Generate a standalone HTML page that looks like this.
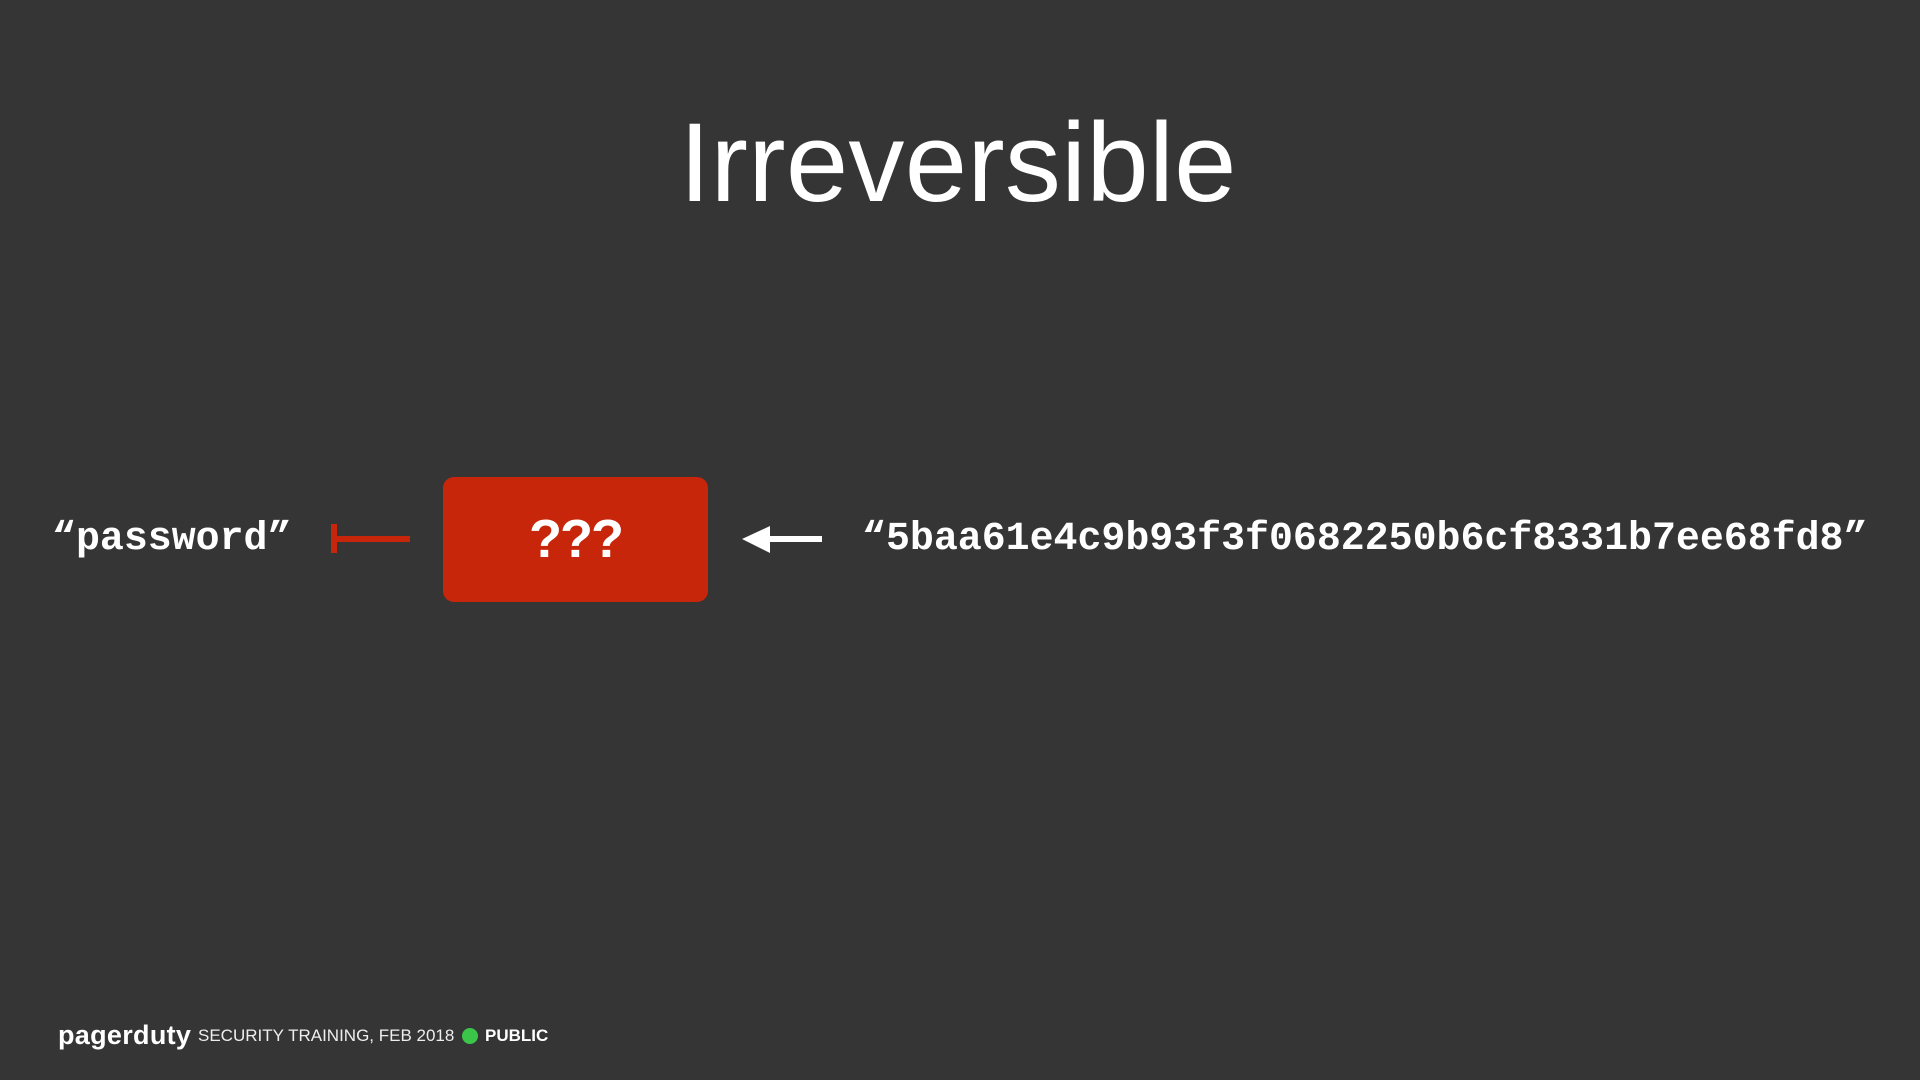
<!DOCTYPE html>
<html><head><meta charset="utf-8"><style>
html,body{margin:0;padding:0}
body{width:1920px;height:1080px;background:#353535;position:relative;overflow:hidden;font-family:"Liberation Sans",sans-serif;color:#fff}
.a{position:absolute}
.title{left:0;width:1916px;text-align:center;top:93px;font-size:112px;line-height:140px;letter-spacing:0.3px}
.mono{font-family:"Liberation Mono",monospace;font-weight:bold;font-size:39.9px;line-height:50px;white-space:nowrap}
.box{left:443px;top:477px;width:265px;height:125px;background:#c8260a;border-radius:11px;text-align:center;font-weight:bold;font-size:54px;line-height:125px;letter-spacing:-2px}
.foot{font-size:17px;top:1025px;line-height:22px;white-space:nowrap}
</style></head><body>
<div class="a title">Irreversible</div>
<div class="a mono" style="left:52px;top:514px">“password”</div>
<div class="a" style="left:331px;top:524px;width:6px;height:29px;background:#c8260a"></div>
<div class="a" style="left:336px;top:536px;width:74px;height:6px;background:#c8260a"></div>
<div class="a box">???</div>
<svg class="a" style="left:740px;top:524px" width="84" height="32"><path d="M2 15 L30 2 L30 12 L82 12 L82 18 L30 18 L30 29 Z" fill="#fff"/></svg>
<div class="a mono" style="left:862px;top:514px">“5baa61e4c9b93f3f0682250b6cf8331b7ee68fd8”</div>
<div class="a foot" style="left:58px;top:1020px;font-size:27px;font-weight:bold;letter-spacing:0.3px;line-height:30px">pagerduty</div>
<div class="a foot" style="left:198px;color:#eee">SECURITY TRAINING, FEB 2018</div>
<div class="a" style="left:462px;top:1028px;width:16px;height:16px;border-radius:50%;background:#3bc64a"></div>
<div class="a foot" style="left:485px;font-weight:bold">PUBLIC</div>
</body></html>
